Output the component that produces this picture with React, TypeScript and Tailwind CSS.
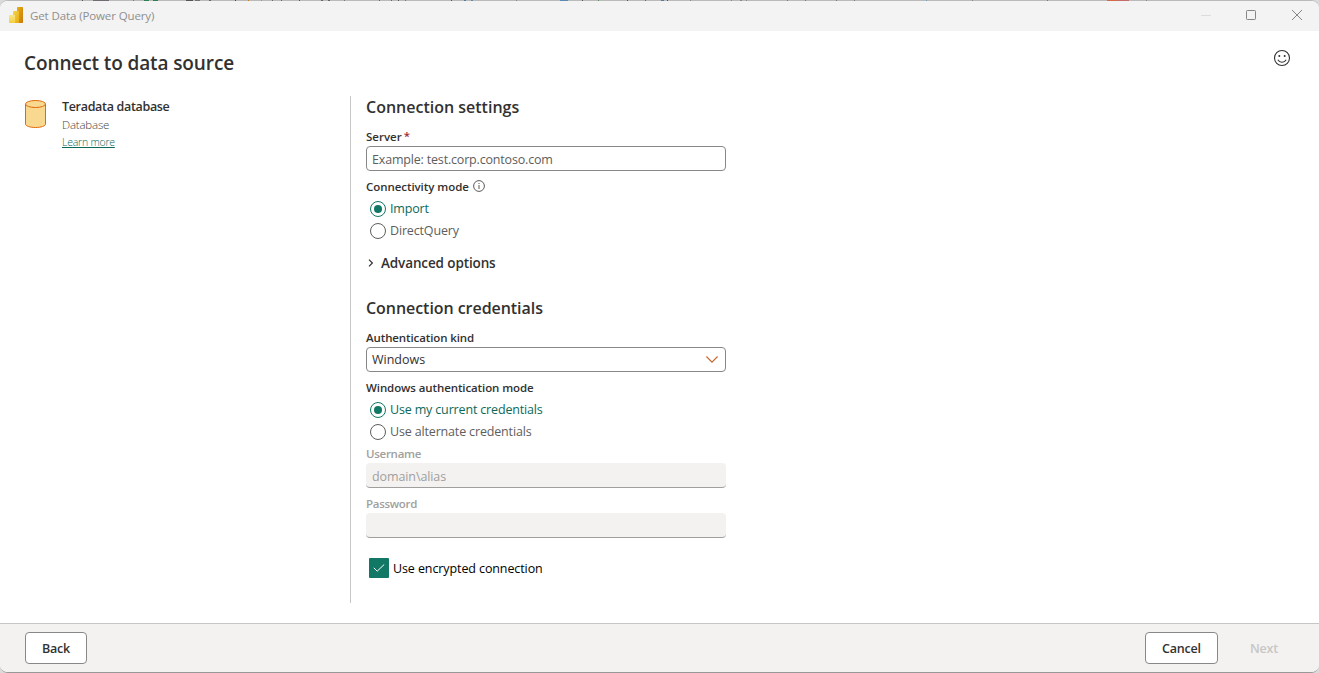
import React from "react";
import clsx from "clsx";

// [left, width, colour] of what shows through along the window's top edge
const edgeMarks: [number, number, string][] = [
  [82, 1, "#555555"],
  [93, 16, "#716c72"],
  [133, 1, "#777777"],
  [144, 5, "#2f7d50"],
  [153, 5, "#2f7d50"],
  [186, 7, "#565356"],
  [195, 5, "#757275"],
  [209, 2, "#666666"],
  [235, 1, "#444444"],
  [248, 1, "#d07a20"],
  [261, 1, "#d08a40"],
  [272, 1, "#666666"],
  [281, 1, "#666666"],
  [299, 1, "#555555"],
  [321, 2, "#666666"],
  [328, 2, "#666666"],
  [344, 1, "#777777"],
  [379, 1, "#666666"],
  [391, 1, "#3d6f95"],
  [398, 1, "#555555"],
  [405, 1, "#3d7fb5"],
  [451, 1, "#555555"],
  [464, 2, "#4d7da5"],
  [471, 2, "#5b8bb5"],
  [516, 1, "#888888"],
  [560, 8, "#5b8bb5"],
  [582, 1, "#555555"],
  [598, 1, "#4f9060"],
  [627, 1, "#555555"],
  [645, 1, "#666666"],
  [661, 3, "#4d7da5"],
  [667, 1, "#555555"],
  [690, 1, "#888888"],
  [731, 1, "#888888"],
  [740, 2, "#888888"],
  [746, 1, "#888888"],
  [787, 1, "#777777"],
  [805, 1, "#777777"],
  [836, 1, "#777777"],
  [854, 1, "#777777"],
  [926, 1, "#6aa0b5"],
  [972, 1, "#888888"],
  [1047, 1, "#777777"],
  [1107, 10, "#d06a48"],
  [1117, 12, "#c46c6a"],
  [1146, 1, "#888888"],
];

const PowerBiLogo: React.FC = () => (
  <svg width="14" height="16" viewBox="0 0 14 16" className="shrink-0">
    <defs>
      <linearGradient id="bar-back" x1="0" y1="0" x2="1" y2="1">
        <stop offset="0" stopColor="#e8b010" />
        <stop offset="1" stopColor="#c8780a" />
      </linearGradient>
      <linearGradient id="bar-mid" x1="0" y1="0" x2="1" y2="1">
        <stop offset="0" stopColor="#f6d551" />
        <stop offset="1" stopColor="#e6ab10" />
      </linearGradient>
      <linearGradient id="bar-front" x1="0" y1="0" x2="0" y2="1">
        <stop offset="0" stopColor="#f9e68b" />
        <stop offset="1" stopColor="#f3cf3e" />
      </linearGradient>
    </defs>
    <rect x="8" width="6" height="16" rx="0.7" fill="url(#bar-back)" />
    <path d="M4 4.7Q4 4 4.7 4H9.3Q10 4 10 4.7V16H4Z" fill="url(#bar-mid)" />
    <path d="M0 8.7Q0 8 .7 8H5.3Q6 8 6 8.7V16H.7Q0 16 0 15.3Z" fill="url(#bar-front)" />
  </svg>
);

const DatabaseIcon: React.FC = () => (
  <svg width="21" height="28" viewBox="0 0 21 28" className="shrink-0">
    <path d="M.5 4V24C.5 26 5 27.5 10.5 27.5S20.5 26 20.5 24V4" fill="#f8d98f" stroke="#dd6b10" />
    <ellipse cx="10.5" cy="4" rx="10" ry="3.5" fill="#f8d98f" stroke="#dd6b10" />
  </svg>
);

interface FieldLabelProps {
  children: React.ReactNode;
  disabled?: boolean;
  className?: string;
}

const FieldLabel: React.FC<FieldLabelProps> = ({ children, disabled, className }) => (
  <div
    className={clsx(
      "flex h-[19px] items-center text-[11.5px] font-semibold",
      disabled ? "text-[#a19f9d]" : "text-[#323130]",
      className
    )}
  >
    {children}
  </div>
);

interface RadioProps {
  label: string;
  checked?: boolean;
}

const Radio: React.FC<RadioProps> = ({ label, checked }) => (
  <div
    className={clsx(
      "flex h-[22px] items-center gap-1 pl-1 text-[12.5px] leading-4",
      checked ? "text-[#0c695a]" : "text-[#605e5c]"
    )}
  >
    <span
      className={clsx(
        "flex size-4 items-center justify-center rounded-full border bg-white",
        checked ? "border-[#117865]" : "border-[#605e5c]"
      )}
    >
      {checked && <span className="size-2 rounded-full bg-[#117865]" />}
    </span>
    <span className="pb-px tracking-[-0.16px]">{label}</span>
  </div>
);

const TitleBar: React.FC = () => (
  <header className="flex h-[30px] shrink-0 items-center bg-[#f3f3f3] pl-[9px] text-[#8f8f8f]">
    <div className="pb-0.5">
      <PowerBiLogo />
    </div>
    <span className="ml-[7px] text-[11.5px] leading-4 tracking-[-0.11px]">Get Data (Power Query)</span>
    <div className="ml-auto flex items-center pb-0.5 pr-[17px]">
      <svg width="10" height="10" viewBox="0 0 10 10" stroke="#dcdcdc">
        <path d="M0 5.5H10" />
      </svg>
      <svg width="10" height="10" viewBox="0 0 10 10" className="ml-[35px]" fill="none" stroke="#858585">
        <rect x="0.5" y="0.5" width="9" height="9" rx="0.8" />
      </svg>
      <svg width="10" height="10" viewBox="0 0 10 10" className="ml-9" stroke="#858585">
        <path d="M0 0L10 10M10 0L0 10" />
      </svg>
    </div>
  </header>
);

const DataSource: React.FC = () => (
  <aside className="flex w-[326px] gap-4 pt-1">
    <div className="pl-px">
      <DatabaseIcon />
    </div>
    <div className="-mt-0.5">
      <div className="text-[12.5px] font-semibold leading-[18px] tracking-[-0.32px] text-[#323130]">Teradata database</div>
      <div className="text-[11.5px] font-light leading-[18px] tracking-[-0.2px] text-[#484644]">Database</div>
      <a className="block text-[10.5px] font-light leading-4 tracking-[-0.22px] text-[#0c695a] underline underline-offset-1">Learn more</a>
    </div>
  </aside>
);

const ConnectionForm: React.FC = () => (
  <section className="flex w-[376px] flex-col border-l border-[#c8c6c4] pl-[15px]">
    <h2 className="h-[31px] text-[16px] font-semibold leading-[22px] text-[#323130]">Connection settings</h2>
    <FieldLabel>
      Server <span className="mb-px ml-0.5 text-[#a4262c]">*</span>
    </FieldLabel>
    <div className="flex h-[25px] items-center rounded border border-[#8a8886] px-[5px] pt-0.5 text-[12.5px] leading-4 tracking-[-0.18px] text-[#605e5c]">
      Example: test.corp.contoso.com
    </div>
    <FieldLabel className="mt-1.5 tracking-[-0.06px]">
      Connectivity mode
      <svg width="12" height="12" viewBox="0 0 12 12" className="mb-0.5 ml-1" fill="none" stroke="#4a4846">
        <circle cx="6" cy="6" r="5.4" strokeWidth="0.9" />
        <path d="M6 5V9M6 3V4" strokeWidth="0.9" />
      </svg>
    </FieldLabel>
    <div className="mt-0.5">
      <Radio label="Import" checked />
      <Radio label="DirectQuery" />
    </div>
    <div className="mt-2.5 flex h-[21px] items-center text-[13.5px] font-semibold leading-5 tracking-[-0.12px] text-[#323130]">
      <svg width="6" height="8" viewBox="0 0 6 8" className="ml-0.5 mr-[7px]" fill="none" stroke="#323130" strokeWidth="1.2">
        <path d="M1 .6L4.4 4L1 7.4" />
      </svg>
      Advanced options
    </div>

    <h2 className="mt-6 h-[31px] text-[16px] font-semibold leading-[22px] tracking-[-0.05px] text-[#323130]">
      Connection credentials
    </h2>
    <FieldLabel className="tracking-[-0.11px]">Authentication kind</FieldLabel>
    <div className="flex h-[25px] items-center justify-between rounded border border-[#8a8886] pl-[5px] pr-[7px] text-[12.5px] leading-4 text-[#323130]">
      Windows
      <svg width="12" height="7" viewBox="0 0 12 7" fill="none" stroke="#c4662a" strokeWidth="1.1">
        <path d="M.4 .5L6 6.1L11.6 .5" />
      </svg>
    </div>
    <FieldLabel className="mt-1.5 tracking-[-0.1px]">Windows authentication mode</FieldLabel>
    <div className="mt-0.5">
      <Radio label="Use my current credentials" checked />
      <Radio label="Use alternate credentials" />
    </div>
    <FieldLabel disabled className="mt-px tracking-[-0.28px]">Username</FieldLabel>
    <div className="flex h-[25px] items-center rounded border-b border-[#a19f9d] bg-[#f3f2f1] px-1.5 pt-[3px] text-[12.5px] leading-4 tracking-[-0.1px] text-[#a19f9d]">
      domain\alias
    </div>
    <FieldLabel disabled className="mt-1.5 tracking-[-0.3px]">Password</FieldLabel>
    <div className="h-[25px] rounded border-b border-[#a19f9d] bg-[#f3f2f1]" />

    <div className="mt-5 flex items-center gap-1 pl-[3px] text-[12.5px] leading-4 tracking-[-0.1px] text-black">
      <span className="flex size-5 items-center justify-center rounded-[1px] bg-[#117865]">
        <svg width="12" height="8" viewBox="0 0 12 8" fill="none" stroke="white">
          <path d="M.8 3.8L4.2 7.2L11.2 .5" />
        </svg>
      </span>
      <span className="pt-0.5">Use encrypted connection</span>
    </div>
  </section>
);

export default function App() {
  return (
    <div className="relative h-[673px] w-[1319px] overflow-hidden bg-[#dadada] font-['Open_Sans','Noto_Sans',sans-serif]">
      <div className="flex h-full flex-col overflow-hidden rounded-lg border-y border-b-[#989898] border-t-[#bababa] bg-white">
        <TitleBar />

        <main className="flex h-[592px] shrink-0 flex-col pl-6">
          <div className="flex h-[65px] items-start justify-between pr-7 pt-[18px]">
            <h1 className="text-[19px] font-semibold leading-7 tracking-[-0.11px] text-[#323130]">Connect to data source</h1>
            <svg width="18" height="18" viewBox="0 0 18 18" fill="none" stroke="#323130" strokeWidth="1.1">
              <circle cx="9" cy="9" r="7.5" />
              <circle cx="6.3" cy="7" r="1" fill="#323130" stroke="none" />
              <circle cx="11.7" cy="7" r="1" fill="#323130" stroke="none" />
              <path d="M4.8 10.7Q6.3 13.2 9 13.2T13.2 10.7" />
            </svg>
          </div>
          <div className="flex h-[507px]">
            <DataSource />
            <ConnectionForm />
          </div>
        </main>

        <footer className="flex flex-1 items-start border-t border-[#c8c6c4] bg-[#f3f2f1] pl-[25px] pr-[17px] pt-2 text-[12.5px] font-semibold tracking-[-0.2px] text-[#323130]">
          <button className="h-8 w-[62px] rounded border border-[#8a8886] bg-white pt-[3px]">Back</button>
          <button className="ml-auto h-8 w-[73px] rounded border border-[#8a8886] bg-white pt-[3px]">Cancel</button>
          <button className="ml-2 h-8 w-[76px] pt-[3px] text-[#c8c6c4]" disabled>
            Next
          </button>
        </footer>
      </div>

      {edgeMarks.map(([left, width, color]) => (
        <span key={left} className="absolute top-0 h-px" style={{ left, width, backgroundColor: color }} />
      ))}
    </div>
  );
}
